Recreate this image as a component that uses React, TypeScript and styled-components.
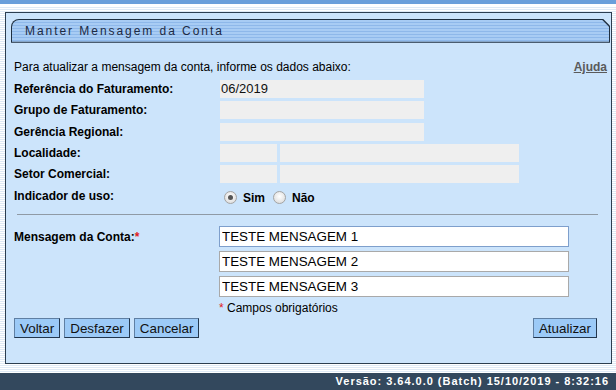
import * as React from 'react'
import styled, { createGlobalStyle } from 'styled-components'

const GlobalStyle = createGlobalStyle`
    html, body {
        margin: 0;
        padding: 0;
    }
    body {
        width: 616px;
        height: 390px;
        overflow: hidden;
        font-family: "Liberation Sans", Arial, sans-serif;
        background: repeating-linear-gradient(#ffffff 0 1px, #dfeaf6 1px 2px);
    }
`

const Screen = styled.div`
    display: flex;
    flex-direction: column;
    height: 390px;
`

const TopStrip = styled.div`
    height: 4px;
    background: #6a9fdb;
    border-bottom: 2px solid #ffffff;
`

const PageBody = styled.div`
    flex: 1;
    padding: 6px 4px 0 5px;
`

const Panel = styled.div`
    height: 352px;
    box-sizing: border-box;
    border: 1px solid #2c3e50;
    background: #cce4fb;
    padding: 6px 0 0 5px;
    display: flex;
    flex-direction: column;
`

const TitleFrame = styled.div`
    height: 24px;
    margin-right: 1px;
    background: #1f2f40;
    border-radius: 8px 0 0 0;
    clip-path: polygon(0 0, calc(100% - 7px) 0, 100% 7px, 100% 100%, 0 100%);
    padding: 1px;
    box-sizing: border-box;
`

const TitleBar = styled.div`
    height: 100%;
    border-radius: 7px 0 0 0;
    clip-path: polygon(0 0, calc(100% - 7px) 0, 100% 7px, 100% 100%, 0 100%);
    background: repeating-linear-gradient(#a8ccf4 0 2px, #8eb8ea 2px 3px);
    display: flex;
    align-items: center;
    padding-left: 13px;
    font-size: 12px;
    letter-spacing: 1.95px;
    color: #1c2a44;
`

const Content = styled.div`
    padding: 17px 4px 0 3px;
    display: flex;
    flex-direction: column;
    font-size: 12px;
    color: #000;
`

const IntroRow = styled.div`
    display: flex;
    justify-content: space-between;
    align-items: center;
    height: 14px;
    margin-bottom: 5px;
`

const HelpLink = styled.a`
    font-weight: bold;
    color: #5a5a5a;
    text-decoration: underline;
    cursor: pointer;
`

const FieldGrid = styled.div`
    display: grid;
    grid-template-columns: 206px 1fr;
    grid-auto-rows: 21.4px;
    align-items: start;
`

const Label = styled.div`
    font-weight: bold;
    line-height: 18px;
    padding-top: 1px;
`

const Required = styled.span`
    color: #e02020;
`

const Boxes = styled.div`
    display: flex;
    gap: 3px;
    padding-top: 1px;
`

const ReadBox = styled.div<{ $w: number }>`
    width: ${p => p.$w}px;
    height: 18px;
    background: #efefef;
    font-size: 13px;
    line-height: 18px;
    padding-left: 1px;
    box-sizing: border-box;
    color: #111;
`

const RadioGroup = styled.div`
    display: flex;
    align-items: center;
    padding: 5px 0 0 4px;
    font-weight: bold;
    gap: 4px;
`

const RadioDot = styled.span<{ $on?: boolean }>`
    width: 11px;
    height: 11px;
    border-radius: 50%;
    border: 1px solid #a4a4a4;
    background: radial-gradient(circle at 50% 40%, #ffffff, #d6d6d6);
    position: relative;
    margin-right: 2px;
    &::after {
        content: '';
        display: ${p => (p.$on ? 'block' : 'none')};
        position: absolute;
        left: 3px;
        top: 3px;
        width: 5px;
        height: 5px;
        border-radius: 50%;
        background: #555;
    }
`

const RadioText = styled.span`
    margin-right: 4px;
`

const Separator = styled.hr`
    border: none;
    border-top: 1px solid #8f9aa5;
    margin: 7px 9px 0 3px;
    height: 0;
`

const MessageSection = styled.div`
    display: grid;
    grid-template-columns: 205px 350px;
    padding-top: 11px;
`

const MessageLabel = styled(Label)`
    padding-top: 2px;
`

const MessageInputs = styled.div`
    display: flex;
    flex-direction: column;
    gap: 4px;
`

const TextInput = styled.input<{ $focus?: boolean }>`
    width: 350px;
    height: 21px;
    box-sizing: border-box;
    border: 1px solid ${p => (p.$focus ? '#7e9fcc' : '#a9a9a9')};
    background: #fff;
    font-family: "Liberation Sans", Arial, sans-serif;
    font-size: 13.4px;
    color: #000;
    padding: 0 2px;
    outline: none;
`

const RequiredNote = styled.div`
    font-size: 12px;
    line-height: 14px;
    margin-top: 0;
`

const ButtonBar = styled.div`
    display: flex;
    justify-content: space-between;
    align-items: center;
    margin-top: 3px;
    padding-right: 10px;
`

const ButtonGroup = styled.div`
    display: flex;
    gap: 4px;
`

const Button = styled.button`
    height: 20px;
    box-sizing: border-box;
    padding: 0 5px;
    border: 1px solid #22364d;
    border-top-color: #5f7fa3;
    border-left-color: #5f7fa3;
    background: #9ccaf7;
    font-family: "Liberation Sans", Arial, sans-serif;
    font-size: 13.4px;
    color: #111;
    cursor: pointer;
`

const Footer = styled.div`
    height: 18px;
    margin-top: 9px;
    background: #33485d;
    color: #fff;
    font-size: 11px;
    font-weight: bold;
    letter-spacing: 0.98px;
    display: flex;
    align-items: center;
    justify-content: flex-end;
    padding-right: 7px;
`

const fields = [
    { label: 'Referência do Faturamento:', boxes: [204], value: '06/2019' },
    { label: 'Grupo de Faturamento:', boxes: [204] },
    { label: 'Gerência Regional:', boxes: [204] },
    { label: 'Localidade:', boxes: [57, 239] },
    { label: 'Setor Comercial:', boxes: [57, 239] },
]

const App = () => {
    const [messages, setMessages] = React.useState(['TESTE MENSAGEM 1', 'TESTE MENSAGEM 2', 'TESTE MENSAGEM 3'])
    const updateMessage = (index: number, value: string) => {
        setMessages(messages.map((m, i) => (i === index ? value : m)))
    }
    return (
        <Screen>
            <GlobalStyle />
            <TopStrip />
            <PageBody>
                <Panel>
                    <TitleFrame>
                        <TitleBar>Manter Mensagem da Conta</TitleBar>
                    </TitleFrame>
                    <Content>
                        <IntroRow>
                            <span>Para atualizar a mensagem da conta, informe os dados abaixo:</span>
                            <HelpLink>Ajuda</HelpLink>
                        </IntroRow>
                        <FieldGrid>
                            {fields.map(field => (
                                <React.Fragment key={field.label}>
                                    <Label>{field.label}</Label>
                                    <Boxes>
                                        {field.boxes.map((w, i) => (
                                            <ReadBox key={i} $w={w}>{i === 0 ? field.value : null}</ReadBox>
                                        ))}
                                    </Boxes>
                                </React.Fragment>
                            ))}
                            <Label>Indicador de uso:</Label>
                            <RadioGroup>
                                <RadioDot $on />
                                <RadioText>Sim</RadioText>
                                <RadioDot />
                                <RadioText>Não</RadioText>
                            </RadioGroup>
                        </FieldGrid>
                        <Separator />
                        <MessageSection>
                            <MessageLabel>
                                Mensagem da Conta:<Required>*</Required>
                            </MessageLabel>
                            <MessageInputs>
                                {messages.map((m, i) => (
                                    <TextInput
                                        key={i}
                                        $focus={i === 0}
                                        value={m}
                                        onChange={e => updateMessage(i, e.target.value)}
                                    />
                                ))}
                                <RequiredNote>
                                    <Required>*</Required> Campos obrigatórios
                                </RequiredNote>
                            </MessageInputs>
                        </MessageSection>
                        <ButtonBar>
                            <ButtonGroup>
                                <Button>Voltar</Button>
                                <Button>Desfazer</Button>
                                <Button>Cancelar</Button>
                            </ButtonGroup>
                            <Button>Atualizar</Button>
                        </ButtonBar>
                    </Content>
                </Panel>
            </PageBody>
            <Footer>Versão: 3.64.0.0 (Batch) 15/10/2019 - 8:32:16</Footer>
        </Screen>
    )
}

export default App
